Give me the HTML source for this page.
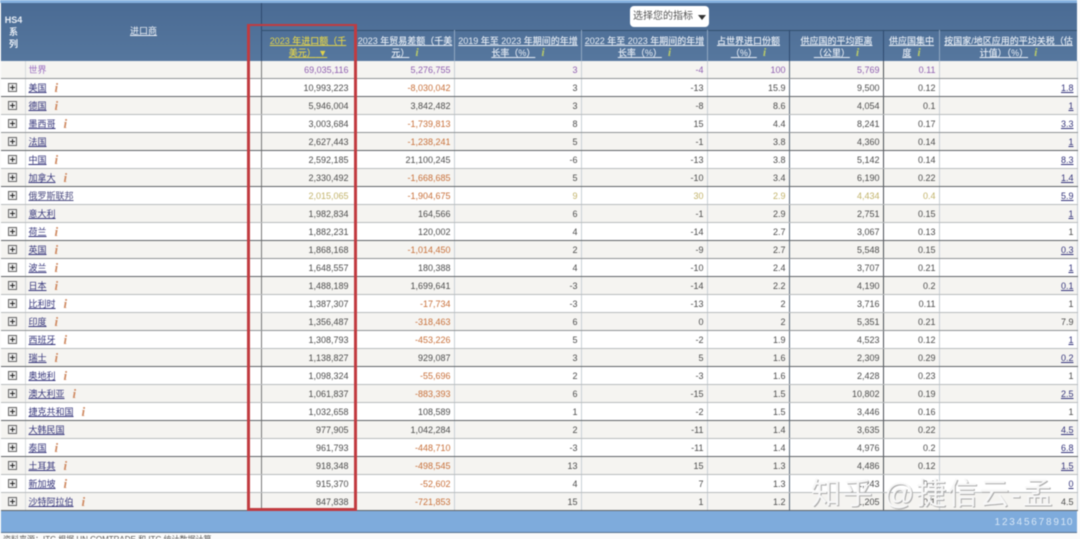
<!DOCTYPE html>
<html><head><meta charset="utf-8"><style>
html,body{margin:0;padding:0;background:#fbfbfb;width:1080px;height:539px;overflow:hidden}
#w{position:relative;width:1080px;height:539px;overflow:hidden;filter:blur(.45px);font:9px "Liberation Sans","Noto Sans CJK SC",sans-serif;color:#333}
.a{position:absolute}
#top{left:0;top:0;width:1077px;height:3px;background:#86b2e0}
#hd{left:1px;top:3px;width:1076px;height:58px;background:linear-gradient(#4a6b94,#56779e)}
.v{position:absolute;top:30px;height:31px;width:1px;background:#2f4b70}
.h{position:absolute;top:35px;height:26px;text-align:center;color:#e8eef6;font-size:9px;line-height:12px;font-weight:500;text-decoration:underline}
.h b{color:#b6c86a;font:italic bold 12px/10px "Liberation Serif",serif;text-decoration:none;display:inline-block;margin-left:6px}
table{position:absolute;left:1px;top:61px;width:1076px;border-collapse:collapse;table-layout:fixed}
td{height:17px;padding:0 3px 0 0;text-align:right;border-bottom:1px solid #b9bcbe;border-right:1px solid #c9d0d6;line-height:14px;white-space:nowrap;overflow:hidden;color:#4c4c4c}
td:first-child{padding:0;text-align:center;border-right:1px solid #d8dcdf}
td:nth-child(2){text-align:left;padding-left:3px;border-right:1px solid #777}
td:nth-child(3){padding-right:6px}
td:nth-child(7){border-right:1px solid #5a6a7a}
td:nth-child(8){border-right:1px solid #4a4f55}
tr{background:#fff}
tr:nth-child(odd){background:#f5f4f1}
tr:nth-child(1) td,tr:nth-child(4) td,tr:nth-child(11) td,tr:nth-child(15) td{border-bottom-color:#8f9396}
tr:nth-child(2) td,tr:nth-child(5) td,tr:nth-child(7) td,tr:nth-child(10) td,tr:nth-child(12) td,tr:nth-child(17) td,tr:nth-child(20) td,tr:nth-child(22) td,tr:nth-child(25) td{border-bottom-color:#606468}
tr:first-child td{color:#8f5fb0}
tr:first-child td:nth-child(2){color:#9a6cc0}
td:nth-child(2) u{color:#33337a}
td:nth-child(10) u{color:#33337a}
.o{color:#c8703a!important}
.y td{color:#c2b36a}
.y td:nth-child(2) u{color:#4a4a80}
.y td:last-child u{color:#33337a}
.p{display:inline-block;box-sizing:border-box;width:9px;height:9px;border:1px solid #666;background:#eee;position:relative;vertical-align:-1px}
.p:after{content:"";position:absolute;left:1px;top:3px;width:5px;height:1px;background:#222}
.p:before{content:"";position:absolute;left:3px;top:1px;width:1px;height:5px;background:#222}
i{font:italic bold 13px/10px "Liberation Serif",serif;color:#cf8a62;margin-left:8px;display:inline-block;vertical-align:-1px;width:5px}
#rb{left:247px;top:24px;width:104px;height:482px;border:3px solid #c13b40;border-top-width:2.5px}
#ft{left:1px;top:511px;width:1072px;padding-right:4px;height:21px;background:#7eabdc;border-bottom:1px solid #56708e;text-align:right;color:#d6e6f6;font-size:10px;line-height:23px;letter-spacing:.6px;word-spacing:-2.2px}
#wm{left:811px;top:476px;font-size:30px;line-height:38px;color:#f7f7f7;letter-spacing:1.6px;text-shadow:1px 1px 0 #aaa;white-space:nowrap}
</style></head><body><div id="w">
<div class="a" id="top"></div>
<div class="a" id="hd"></div>
<div class="a" style="left:261px;top:3px;width:1px;height:58px;background:#2f4b70"></div>
<div class="a" style="left:261px;top:30px;width:816px;height:1px;background:#33506f"></div>
<div class="v" style="left:355px"></div><div class="v" style="left:454px;background:#8fa6c0"></div><div class="v" style="left:581px;background:#8fa6c0"></div><div class="v" style="left:707px;background:#8fa6c0"></div><div class="v" style="left:789px"></div><div class="v" style="left:883px"></div><div class="v" style="left:939px;background:#8fa6c0"></div>
<div class="a" style="left:2px;top:14px;width:23px;text-align:center;color:#e8eef6;font-weight:bold;font-size:9px;line-height:12px">HS4<br>系<br>列</div>
<div class="a" style="left:26px;top:25px;width:235px;text-align:center;color:#eef2f8;text-decoration:underline;font-size:9px;line-height:12px">进口商</div>
<div class="a" style="left:630px;top:6px;width:79px;height:21px;background:#fff;border-radius:4px;color:#555;font-size:10px;line-height:22px;padding-left:3px;box-sizing:border-box">选择您的指标<span style="position:absolute;left:68px;top:9px;border:4px solid transparent;border-top:5px solid #333;border-bottom:0"></span></div>
<div class="h" style="left:264px;width:88px;color:#e3d34a">2023 年进口额（千<br>美元）<span style="color:#e3d34a;font-size:9px">&nbsp;▼</span></div>
<div class="h" style="left:356px;width:98px">2023 年贸易差额（千美<br>元）<b>i</b></div>
<div class="h" style="left:456px;width:124px">2019 年至 2023 年期间的年增<br>长率（%）<b>i</b></div>
<div class="h" style="left:583px;width:123px">2022 年至 2023 年期间的年增<br>长率（%）<b>i</b></div>
<div class="h" style="left:709px;width:79px">占世界进口份额<br>（%）<b>i</b></div>
<div class="h" style="left:791px;width:91px">供应国的平均距离<br>（公里）<b>i</b></div>
<div class="h" style="left:885px;width:53px">供应国集中<br>度<b>i</b></div>
<div class="h" style="left:941px;width:135px">按国家/地区应用的平均关税（估<br>计值）（%）<b>i</b></div>
<table><colgroup><col style="width:24px"><col style="width:236px"><col style="width:94px"><col style="width:99px"><col style="width:127px"><col style="width:126px"><col style="width:82px"><col style="width:94px"><col style="width:56px"><col style="width:138px"></colgroup>
<tr><td></td><td>世界</td><td>69,035,116</td><td>5,276,755</td><td>3</td><td>-4</td><td>100</td><td>5,769</td><td>0.11</td><td></td></tr>
<tr><td><span class="p"></span></td><td><u>美国</u><i>i</i></td><td>10,993,223</td><td class="o">-8,030,042</td><td>3</td><td>-13</td><td>15.9</td><td>9,500</td><td>0.12</td><td><u>1.8</u></td></tr>
<tr><td><span class="p"></span></td><td><u>德国</u><i>i</i></td><td>5,946,004</td><td>3,842,482</td><td>3</td><td>-8</td><td>8.6</td><td>4,054</td><td>0.1</td><td><u>1</u></td></tr>
<tr><td><span class="p"></span></td><td><u>墨西哥</u><i>i</i></td><td>3,003,684</td><td class="o">-1,739,813</td><td>8</td><td>15</td><td>4.4</td><td>8,241</td><td>0.17</td><td><u>3.3</u></td></tr>
<tr><td><span class="p"></span></td><td><u>法国</u></td><td>2,627,443</td><td class="o">-1,238,241</td><td>5</td><td>-1</td><td>3.8</td><td>4,360</td><td>0.14</td><td><u>1</u></td></tr>
<tr><td><span class="p"></span></td><td><u>中国</u><i>i</i></td><td>2,592,185</td><td>21,100,245</td><td>-6</td><td>-13</td><td>3.8</td><td>5,142</td><td>0.14</td><td><u>8.3</u></td></tr>
<tr><td><span class="p"></span></td><td><u>加拿大</u><i>i</i></td><td>2,330,492</td><td class="o">-1,668,685</td><td>5</td><td>-10</td><td>3.4</td><td>6,190</td><td>0.22</td><td><u>1.4</u></td></tr>
<tr class="y"><td><span class="p"></span></td><td><u>俄罗斯联邦</u></td><td>2,015,065</td><td class="o">-1,904,675</td><td>9</td><td>30</td><td>2.9</td><td>4,434</td><td>0.4</td><td><u>5.9</u></td></tr>
<tr><td><span class="p"></span></td><td><u>意大利</u></td><td>1,982,834</td><td>164,566</td><td>6</td><td>-1</td><td>2.9</td><td>2,751</td><td>0.15</td><td><u>1</u></td></tr>
<tr><td><span class="p"></span></td><td><u>荷兰</u><i>i</i></td><td>1,882,231</td><td>120,002</td><td>4</td><td>-14</td><td>2.7</td><td>3,067</td><td>0.13</td><td>1</td></tr>
<tr><td><span class="p"></span></td><td><u>英国</u><i>i</i></td><td>1,868,168</td><td class="o">-1,014,450</td><td>2</td><td>-9</td><td>2.7</td><td>5,548</td><td>0.15</td><td><u>0.3</u></td></tr>
<tr><td><span class="p"></span></td><td><u>波兰</u><i>i</i></td><td>1,648,557</td><td>180,388</td><td>4</td><td>-10</td><td>2.4</td><td>3,707</td><td>0.21</td><td><u>1</u></td></tr>
<tr><td><span class="p"></span></td><td><u>日本</u><i>i</i></td><td>1,488,189</td><td>1,699,641</td><td>-3</td><td>-14</td><td>2.2</td><td>4,190</td><td>0.2</td><td><u>0.1</u></td></tr>
<tr><td><span class="p"></span></td><td><u>比利时</u><i>i</i></td><td>1,387,307</td><td class="o">-17,734</td><td>-3</td><td>-13</td><td>2</td><td>3,716</td><td>0.11</td><td>1</td></tr>
<tr><td><span class="p"></span></td><td><u>印度</u><i>i</i></td><td>1,356,487</td><td class="o">-318,463</td><td>6</td><td>0</td><td>2</td><td>5,351</td><td>0.21</td><td>7.9</td></tr>
<tr><td><span class="p"></span></td><td><u>西班牙</u><i>i</i></td><td>1,308,793</td><td class="o">-453,226</td><td>5</td><td>-2</td><td>1.9</td><td>4,523</td><td>0.12</td><td><u>1</u></td></tr>
<tr><td><span class="p"></span></td><td><u>瑞士</u><i>i</i></td><td>1,138,827</td><td>929,087</td><td>3</td><td>5</td><td>1.6</td><td>2,309</td><td>0.29</td><td><u>0.2</u></td></tr>
<tr><td><span class="p"></span></td><td><u>奥地利</u><i>i</i></td><td>1,098,324</td><td class="o">-55,696</td><td>2</td><td>-3</td><td>1.6</td><td>2,428</td><td>0.23</td><td>1</td></tr>
<tr><td><span class="p"></span></td><td><u>澳大利亚</u><i>i</i></td><td>1,061,837</td><td class="o">-883,393</td><td>6</td><td>-15</td><td>1.5</td><td>10,802</td><td>0.19</td><td><u>2.5</u></td></tr>
<tr><td><span class="p"></span></td><td><u>捷克共和国</u><i>i</i></td><td>1,032,658</td><td>108,589</td><td>1</td><td>-2</td><td>1.5</td><td>3,446</td><td>0.16</td><td>1</td></tr>
<tr><td><span class="p"></span></td><td><u>大韩民国</u></td><td>977,905</td><td>1,042,284</td><td>2</td><td>-11</td><td>1.4</td><td>3,635</td><td>0.22</td><td><u>4.5</u></td></tr>
<tr><td><span class="p"></span></td><td><u>泰国</u><i>i</i></td><td>961,793</td><td class="o">-448,710</td><td>-3</td><td>-11</td><td>1.4</td><td>4,976</td><td>0.2</td><td><u>6.8</u></td></tr>
<tr><td><span class="p"></span></td><td><u>土耳其</u><i>i</i></td><td>918,348</td><td class="o">-498,545</td><td>13</td><td>15</td><td>1.3</td><td>4,486</td><td>0.12</td><td><u>1.5</u></td></tr>
<tr><td><span class="p"></span></td><td><u>新加坡</u><i>i</i></td><td>915,370</td><td class="o">-52,602</td><td>4</td><td>7</td><td>1.3</td><td>1,243</td><td>0.1</td><td><u>0</u></td></tr>
<tr><td><span class="p"></span></td><td><u>沙特阿拉伯</u><i>i</i></td><td>847,838</td><td class="o">-721,853</td><td>15</td><td>1</td><td>1.2</td><td>1,205</td><td>0.1</td><td>4.5</td></tr>
</table>
<div class="a" id="rb"></div>
<div class="a" id="ft">1 2 3 4 5 6 7 8 9 10</div>
<div class="a" style="left:3px;top:534px;color:#555;font-size:8px;white-space:nowrap">资料来源：ITC 根据 UN COMTRADE 和 ITC 统计数据计算</div>
<div class="a" id="wm">知乎 @捷信云-孟</div>
</div></body></html>
